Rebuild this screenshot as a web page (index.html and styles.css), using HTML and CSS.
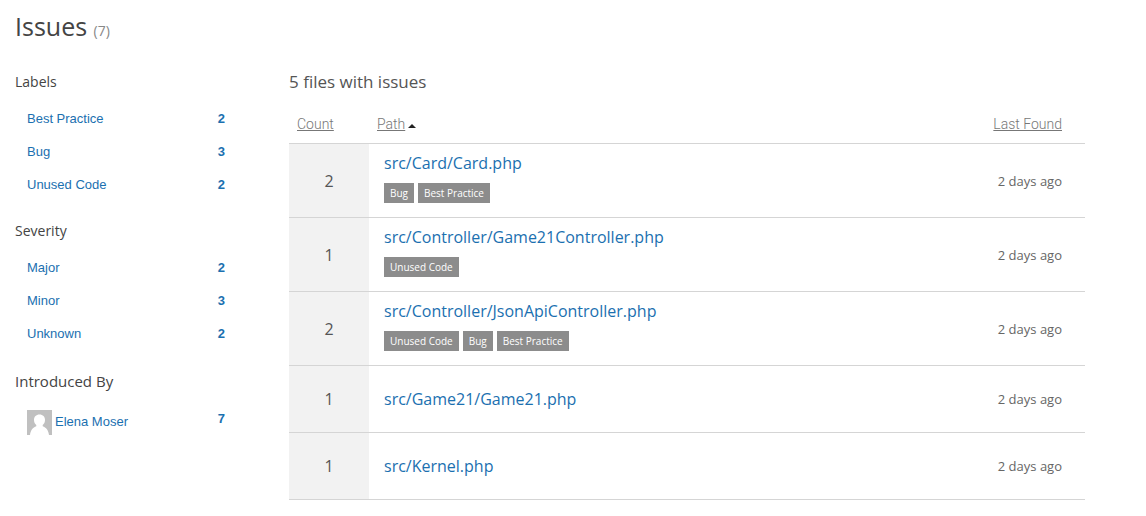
FILE: index.html
```html
<!DOCTYPE html>
<html lang="en">
<head>
<meta charset="utf-8">
<title>Issues</title>
<link rel="stylesheet" href="styles.css">
</head>
<body>
<div class="page">
  <h1 class="page-title">Issues <small class="total">(7)</small></h1>
  <div class="columns">
    <aside class="filters">
      <section class="group">
        <h2 class="group-title">Labels</h2>
        <ul class="filter-list">
          <li><a class="filter" href="#"><span>Best Practice</span><b class="num">2</b></a></li>
          <li><a class="filter" href="#"><span>Bug</span><b class="num">3</b></a></li>
          <li><a class="filter" href="#"><span>Unused Code</span><b class="num">2</b></a></li>
        </ul>
      </section>
      <section class="group">
        <h2 class="group-title">Severity</h2>
        <ul class="filter-list">
          <li><a class="filter" href="#"><span>Major</span><b class="num">2</b></a></li>
          <li><a class="filter" href="#"><span>Minor</span><b class="num">3</b></a></li>
          <li><a class="filter" href="#"><span>Unknown</span><b class="num">2</b></a></li>
        </ul>
      </section>
      <section class="group">
        <h2 class="group-title people-title">Introduced By</h2>
        <ul class="filter-list">
          <li><a class="filter person" href="#">
            <svg class="avatar" viewBox="0 0 25 25" aria-hidden="true"><path fill="#c0c0c0" d="M0 0h25v25H0z"/><path fill="#fff" d="M12.500 4.500c3.400 0 5.500 2.300 5.500 5.500 0 2.200-.9 4-2.300 5v1.200c3.300 1 5.900 4.200 6.300 8.800H3c.4-4.600 3-7.800 6.300-8.800V15C7.900 14 7 12.200 7 10c0-3.200 2.100-5.500 5.500-5.500z"/></svg>
            <span>Elena Moser</span><b class="num">7</b></a></li>
        </ul>
      </section>
    </aside>
    <main class="files">
      <h2 class="files-title">5 files with issues</h2>
      <table class="table">
        <thead>
          <tr>
            <th class="count-head"><a class="sort" href="#">Count</a></th>
            <th class="path-head"><a class="sort" href="#">Path</a><svg class="arrow" viewBox="0 0 8 4" aria-hidden="true"><path fill="#222" d="M0 4L4 0l4 4z"/></svg></th>
            <th class="found-head"><a class="sort" href="#">Last Found</a></th>
          </tr>
        </thead>
        <tbody>
          <tr class="tagged">
            <td class="count">2</td>
            <td class="path"><a class="file" href="#">src/Card/Card.php</a>
              <div class="tags"><span class="tag">Bug</span><span class="tag">Best Practice</span></div></td>
            <td class="found">2 days ago</td>
          </tr>
          <tr class="tagged">
            <td class="count">1</td>
            <td class="path"><a class="file" href="#">src/Controller/Game21Controller.php</a>
              <div class="tags"><span class="tag">Unused Code</span></div></td>
            <td class="found">2 days ago</td>
          </tr>
          <tr class="tagged">
            <td class="count">2</td>
            <td class="path"><a class="file" href="#">src/Controller/JsonApiController.php</a>
              <div class="tags"><span class="tag">Unused Code</span><span class="tag">Bug</span><span class="tag">Best Practice</span></div></td>
            <td class="found">2 days ago</td>
          </tr>
          <tr>
            <td class="count">1</td>
            <td class="path"><a class="file" href="#">src/Game21/Game21.php</a></td>
            <td class="found">2 days ago</td>
          </tr>
          <tr>
            <td class="count">1</td>
            <td class="path"><a class="file" href="#">src/Kernel.php</a></td>
            <td class="found">2 days ago</td>
          </tr>
        </tbody>
      </table>
    </main>
  </div>
</div>
</body>
</html>
```
FILE: styles.css
```css
* {
  box-sizing: border-box;
}

body {
  margin: 0;
  background: #fff;
  color: #444;
  font-family: "Open Sans", sans-serif;
}

.page {
  padding: 9px 61px 0 15px;
}

a {
  color: #1b70b0;
  text-decoration: none;
}

.page-title {
  margin: 0;
  font-size: 25px;
  font-weight: 400;
  line-height: 34px;
}

.total {
  color: #888;
  font-size: 14px;
}

.columns {
  display: flex;
  gap: 52px;
  padding-top: 22px;
}

.filters {
  flex: 0 0 222px;
}

.group {
  margin-bottom: 18px;
}

.group-title {
  margin: 0 0 8px;
  font-size: 14px;
  font-weight: 400;
  line-height: 24px;
}

.people-title {
  font-size: 15px;
  line-height: 26px;
}

.filter-list {
  margin: 0;
  padding: 0;
  list-style: none;
}

.filter {
  display: flex;
  padding: 8px 12px;
  font: 13px/17px "Liberation Sans", Arial, sans-serif;
}

.num {
  margin-left: auto;
}

.person {
  gap: 3px;
}

.person span {
  padding-top: 3px;
}

.avatar {
  width: 25px;
  height: 25px;
}

.files {
  flex: 1;
}

.files-title {
  margin: 0;
  color: #555;
  font-size: 17px;
  font-weight: 400;
  line-height: 24px;
}

.table {
  width: 100%;
  margin-top: 10px;
  border-collapse: separate;
  border-spacing: 0;
}

th,
td {
  padding: 0;
  border-bottom: 1px solid #d5d5d5;
}

th {
  height: 40px;
  font: 300 14px/20px Roboto, sans-serif;
  text-align: left;
}

.count-head {
  width: 80px;
  padding-left: 8px;
}

.path-head {
  padding-left: 8px;
}

.found-head,
.found {
  padding-right: 23px;
  text-align: right;
}

.sort {
  color: #777;
  text-decoration: underline;
}

.arrow {
  width: 8px;
  height: 4px;
  margin-left: 3px;
  vertical-align: 1px;
}

td {
  height: 67px;
}

.tagged td {
  height: 74px;
}

.count {
  background: #f2f2f2;
  color: #555;
  font-size: 16px;
  text-align: center;
}

.path {
  padding-left: 15px;
}

.tagged .path {
  padding-bottom: 6px;
}

.file {
  font-size: 16px;
  line-height: 22px;
}

.tags {
  display: flex;
  gap: 4px;
  margin-top: 9px;
}

.tag {
  padding: 0 6px;
  background: #8c8c8c;
  color: #fff;
  font-size: 10px;
  line-height: 20px;
}

.found {
  color: #666;
  font-size: 13px;
}
```
